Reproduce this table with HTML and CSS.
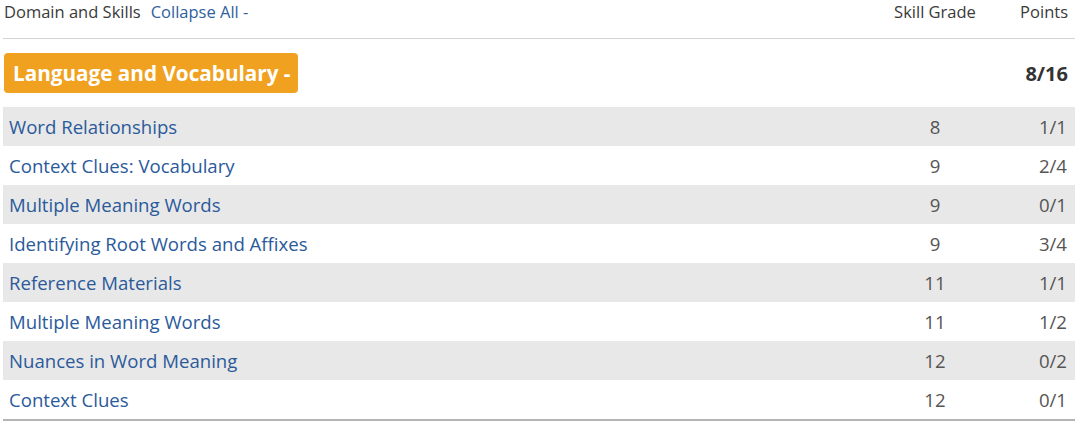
FILE: index.html
```html
<!DOCTYPE html>
<html>
<head>
<meta charset="utf-8">
<link rel="stylesheet" href="styles.css">
</head>
<body>
<div class="report">
  <div class="head">
    <div class="head-left"><span class="head-title">Domain and Skills</span><a class="collapse">Collapse All -</a></div>
    <div class="head-grade">Skill Grade</div>
    <div class="head-points">Points</div>
  </div>
  <div class="domain">
    <div class="domain-btn">Language and Vocabulary -</div>
    <div class="domain-points">8/16</div>
  </div>
  <div class="rows">
    <div class="row alt"><span class="skill">Word Relationships</span><span class="grade">8</span><span class="pts">1/1</span></div>
    <div class="row"><span class="skill">Context Clues: Vocabulary</span><span class="grade">9</span><span class="pts">2/4</span></div>
    <div class="row alt"><span class="skill">Multiple Meaning Words</span><span class="grade">9</span><span class="pts">0/1</span></div>
    <div class="row"><span class="skill">Identifying Root Words and Affixes</span><span class="grade">9</span><span class="pts">3/4</span></div>
    <div class="row alt"><span class="skill">Reference Materials</span><span class="grade">11</span><span class="pts">1/1</span></div>
    <div class="row"><span class="skill">Multiple Meaning Words</span><span class="grade">11</span><span class="pts">1/2</span></div>
    <div class="row alt"><span class="skill">Nuances in Word Meaning</span><span class="grade">12</span><span class="pts">0/2</span></div>
    <div class="row"><span class="skill">Context Clues</span><span class="grade">12</span><span class="pts">0/1</span></div>
  </div>
</div>
</body>
</html>
```
FILE: styles.css
```css
html, body {
  margin: 0;
  padding: 0;
  background: #ffffff;
}
body {
  font-family: "Open Sans", "Liberation Sans", sans-serif;
  color: #333333;
}
.report {
  margin: 0 5px 0 3px;
  width: 1072px;
}
.head {
  display: grid;
  grid-template-columns: 1fr 82px 92px;
  align-items: center;
  height: 24px;
  padding: 0 7px 0 1px;
  margin-bottom: 14px;
  font-size: 16.5px;
  line-height: 24px;
  color: #3a3a3a;
}
.head-title {
  margin-right: 10px;
}
.collapse {
  color: #2f5f9e;
}
.head-grade {
  text-align: center;
}
.head-points {
  text-align: right;
}
.domain {
  border-top: 1px solid #d4d4d4;
  display: flex;
  align-items: center;
  justify-content: space-between;
  padding: 14px 7px 14px 1px;
}
.domain-btn {
  background: #f0a11f;
  color: #ffffff;
  font-weight: 700;
  font-size: 20.7px;
  height: 40px;
  line-height: 40px;
  padding: 0 9px;
  border-radius: 4px;
  box-sizing: border-box;
  width: 294px;
  white-space: nowrap;
}
.domain-points {
  font-weight: 700;
  font-size: 20px;
  color: #333333;
}
.rows {
  border-bottom: 2px solid #b4b4b4;
}
.row {
  display: grid;
  grid-template-columns: 1fr 82px 91px;
  align-items: center;
  height: 39px;
  padding: 0 8px 0 6px;
  font-size: 18.6px;
}
.row.alt {
  background: #e8e8e8;
}
.skill {
  color: #2b5a9b;
}
.grade {
  text-align: center;
  color: #555555;
}
.pts {
  text-align: right;
  color: #555555;
}
```
